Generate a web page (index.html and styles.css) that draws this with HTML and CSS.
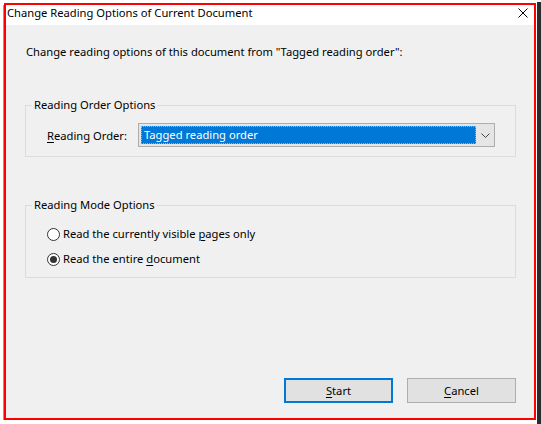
FILE: index.html
```html
<!DOCTYPE html>
<html lang="en">
<head>
<meta charset="utf-8">
<title>Change Reading Options of Current Document</title>
<link rel="stylesheet" href="styles.css">
</head>
<body>
<div class="screen">
  <div class="window">
    <div class="titlebar">
      <span class="title">Change Reading Options of Current Document</span>
      <svg class="close" width="10" height="10" viewBox="0 0 10 10"><path d="M0.5 0.5 L9.5 9.5 M9.5 0.5 L0.5 9.5" stroke="#000" stroke-width="1" fill="none"/></svg>
    </div>
    <div class="content">
      <p class="intro">Change reading options of this document from "Tagged reading order":</p>
      <fieldset class="group group-order">
        <legend>Reading Order Options</legend>
        <div class="order-row">
          <span class="label"><u>R</u>eading Order:</span>
          <div class="select">
            <span class="select-value">Tagged reading order</span>
            <span class="select-arrow"><svg width="9" height="5" viewBox="0 0 9 5"><path d="M0.5 0.5 L4.5 4.5 L8.5 0.5" stroke="#444" stroke-width="1" fill="none"/></svg></span>
          </div>
        </div>
      </fieldset>
      <fieldset class="group group-mode">
        <legend>Reading Mode Options</legend>
        <label class="radio"><span class="dot"></span><span class="radio-text">Read the currently visible <u>p</u>ages only</span></label>
        <label class="radio checked"><span class="dot"></span><span class="radio-text">Read the entire <u>d</u>ocument</span></label>
      </fieldset>
      <div class="buttons">
        <button class="btn default"><u>S</u>tart</button>
        <button class="btn"><u>C</u>ancel</button>
      </div>
    </div>
  </div>
  <div class="edge"></div>
</div>
</body>
</html>
```
FILE: styles.css
```css
html, body {
  margin: 0;
  padding: 0;
  background: #ffffff;
}
body {
  font-family: "Noto Sans", "Liberation Sans", sans-serif;
  font-size: 11.2px;
  color: #000;
}
.screen {
  display: flex;
  width: 541px;
  height: 424px;
  overflow: hidden;
}
.window {
  margin: 3px 0 0 4px;
  width: 532px;
  height: 417px;
  box-sizing: border-box;
  border: 2px solid #ff0000;
  display: flex;
  flex-direction: column;
  background: #f0f0f0;
  box-shadow: -2px 1px 0 -1px #9a9a9a;
}
.edge {
  margin: 2px 0 0 1px;
  width: 4px;
  background: #2b2b2b;
}
.titlebar {
  height: 20px;
  background: #fff;
  display: flex;
  align-items: flex-start;
  justify-content: space-between;
  padding: 0 6px 0 1px;
}
.title {
  line-height: 16px;
}
.close {
  display: block;
  margin-top: 3px;
}
.content {
  flex: 1;
  display: flex;
  flex-direction: column;
  padding: 0 18px 15px 19px;
}
.intro {
  margin: 19px 0 0 1px;
  line-height: 16px;
}
.group {
  margin: 37px 0 0 0;
  border: 1px solid #dcdcdc;
  padding: 0 20px 9px 21px;
  min-width: 0;
}
.group-mode {
  margin-top: 40px;
  padding-bottom: 10px;
}
.group legend {
  padding: 0 2px;
  margin-left: -15px;
  line-height: 16px;
}
.order-row {
  display: flex;
  align-items: center;
  margin-top: 10px;
}
.label {
  width: 91px;
  flex: none;
}
.select {
  flex: 1;
  height: 24px;
  box-sizing: border-box;
  border: 1px solid #adadad;
  background: #e5e5e5;
  display: flex;
  align-items: stretch;
  padding: 2px 0 2px 2px;
}
.select-value {
  flex: 1;
  background: #0078d7;
  color: #fff;
  outline: 1px dotted #f0a040;
  outline-offset: -1px;
  padding-left: 3px;
  line-height: 18px;
}
.select-arrow {
  width: 18px;
  display: flex;
  align-items: center;
  justify-content: center;
}
.select-arrow svg {
  display: block;
  margin-top: 1px;
}
.radio {
  display: flex;
  align-items: center;
  line-height: 16px;
  margin-top: 9px;
}
.radio:first-of-type {
  margin-top: 13px;
}
.dot {
  width: 13px;
  height: 13px;
  box-sizing: border-box;
  border: 1px solid #333;
  border-radius: 50%;
  background: #fff;
  margin-right: 3px;
  position: relative;
  flex: none;
}
.checked .dot::after {
  content: "";
  position: absolute;
  left: 2px;
  top: 2px;
  width: 7px;
  height: 7px;
  border-radius: 50%;
  background: #333;
}
.buttons {
  margin-top: auto;
  display: flex;
  justify-content: flex-end;
  gap: 14px;
}
.btn {
  width: 109px;
  height: 25px;
  box-sizing: border-box;
  border: 1px solid #adadad;
  background: #e1e1e1;
  font-family: inherit;
  font-size: 11.2px;
  color: #000;
  padding: 0;
}
.btn.default {
  border: 2px solid #0078d7;
}
u {
  text-decoration-thickness: 1px;
  text-underline-offset: 2px;
}
```
